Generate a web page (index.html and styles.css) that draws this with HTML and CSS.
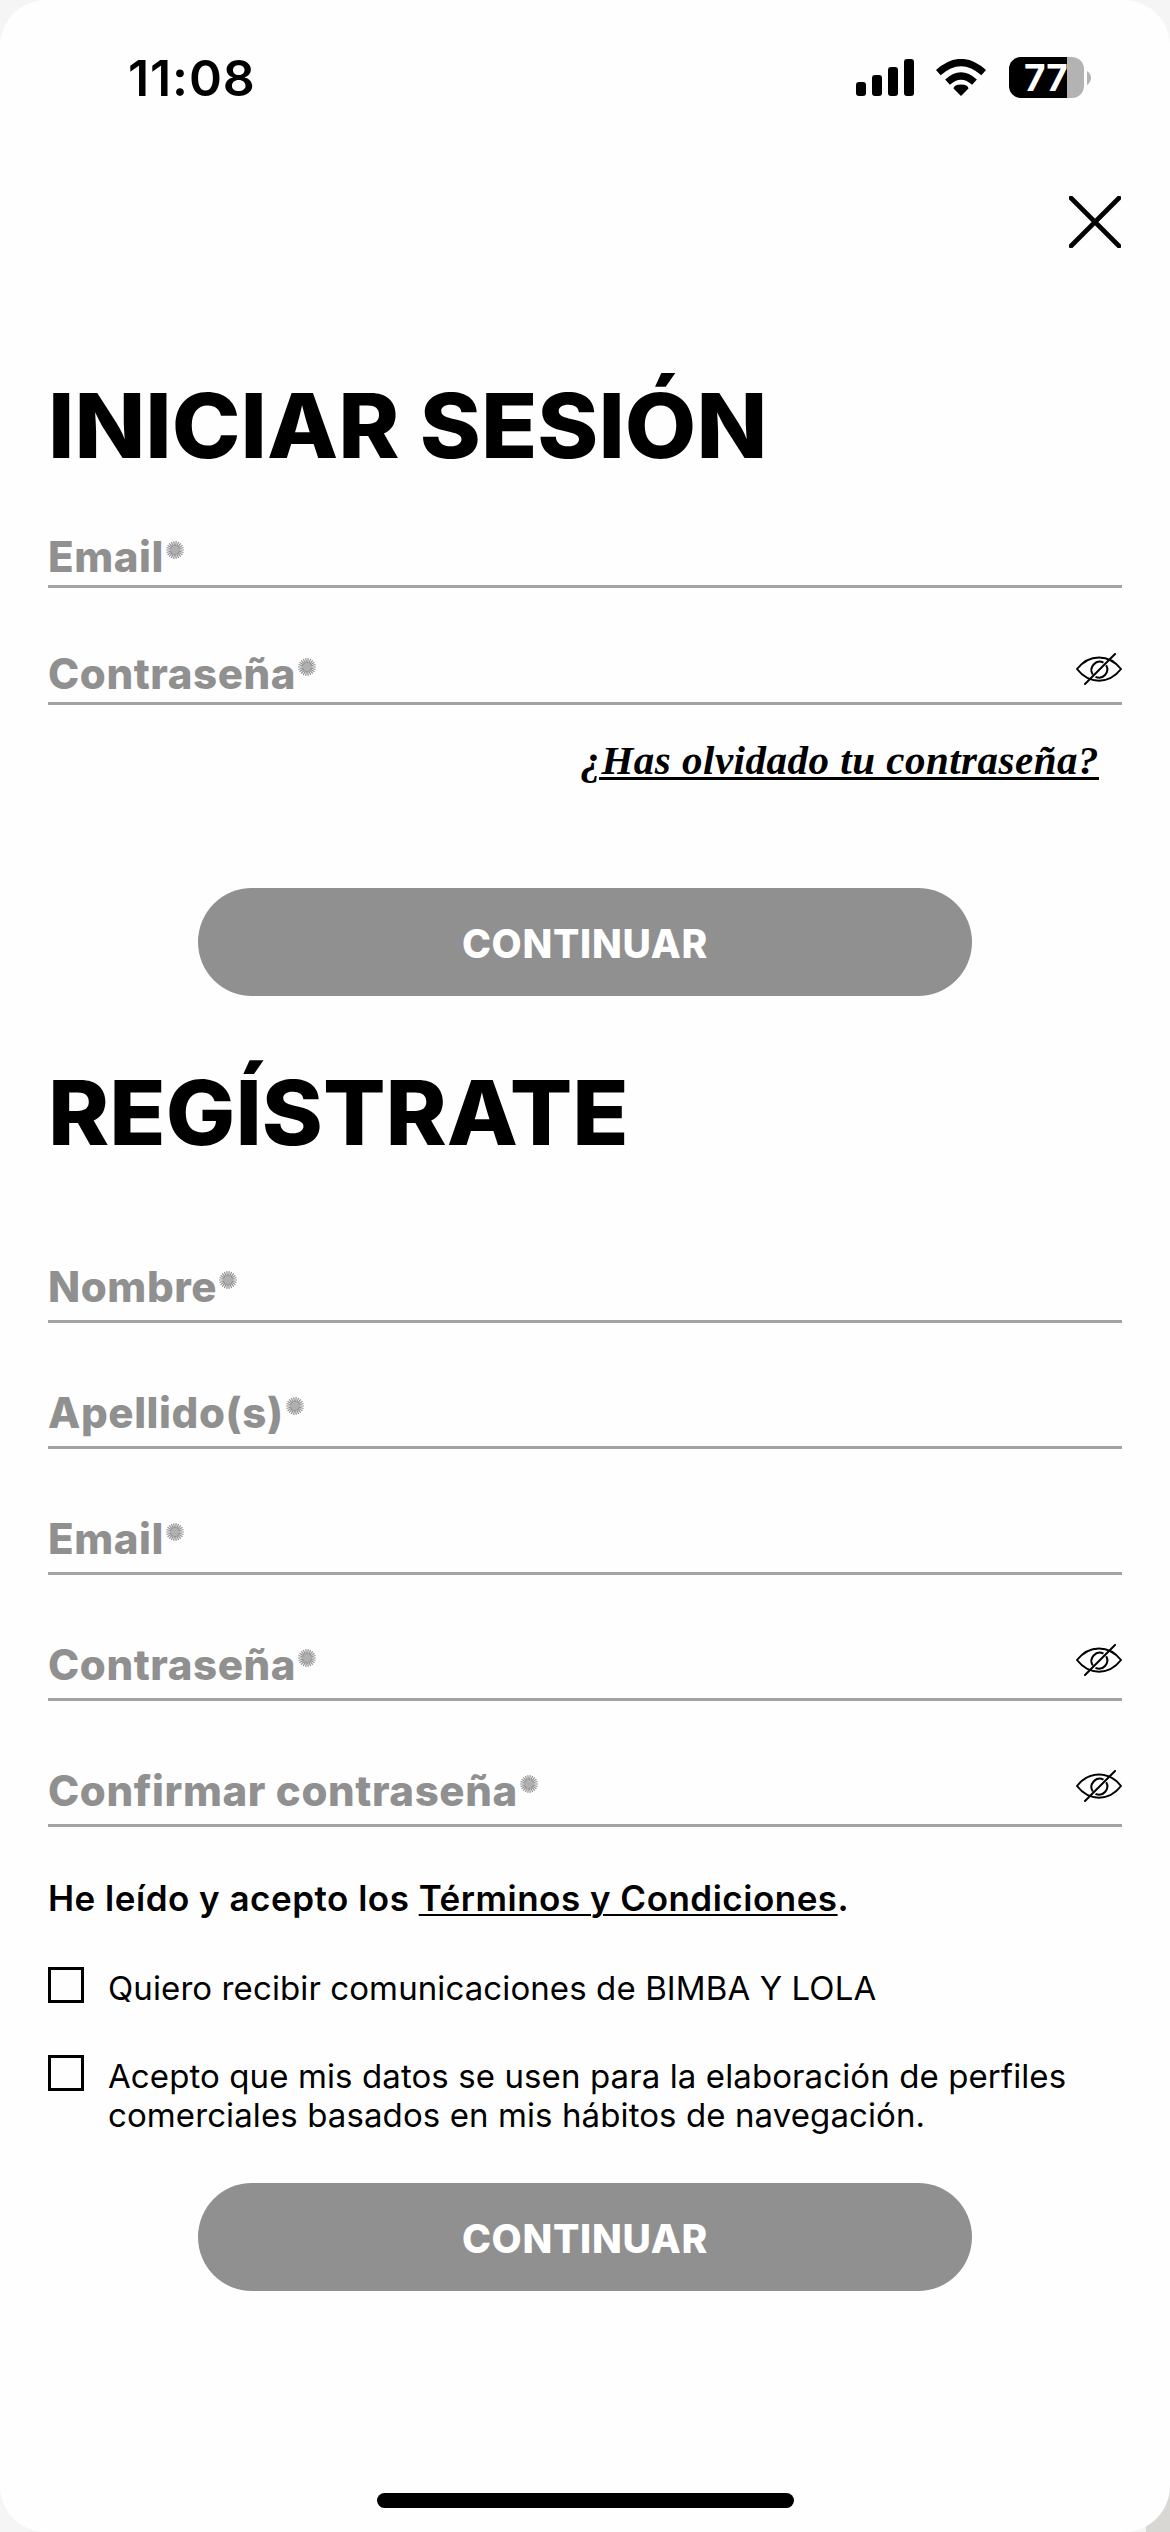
FILE: index.html
```html
<!DOCTYPE html>
<html lang="es">
<head>
  <meta charset="UTF-8" />
  <meta name="viewport" content="width=device-width, initial-scale=1.0"/>
  <title>Iniciar sesión</title>
  <link rel="stylesheet" href="styles.css">
</head>
<body>

<svg class="defs" aria-hidden="true">
  <symbol id="star" viewBox="-9 -9 18 18">
    <path d="M-8.900 0H8.900M-8.540 -2.510L8.540 2.510M-7.490 -4.810L7.490 4.810M-5.830 -6.730L5.830 6.730M-3.700 -8.100L3.700 8.100M-1.270 -8.810L1.270 8.810M1.270 -8.810L-1.270 8.810M3.700 -8.100L-3.700 8.100M5.830 -6.730L-5.830 6.730M7.490 -4.810L-7.490 4.810M8.540 -2.510L-8.540 2.510" fill="none" stroke="currentColor" stroke-width="1.200"/>
    <circle r="4.200" fill="#b0b0b0"/>
  </symbol>
  <symbol id="eye-off" viewBox="0 0 46 32">
    <g fill="none" stroke="#000" stroke-width="2">
      <path d="M1 16C13 0.5 33 0.5 45 16C33 31.500 13 31.500 1 16Z" stroke-linejoin="round"/>
      <path d="M27.500 9.600A8.300 8.300 0 0 0 16.800 21.500"/>
      <path d="M30.200 12.300A8.300 8.300 0 0 1 19.500 23.900"/>
      <path d="M9 31L39 1" stroke-linecap="round"/>
    </g>
  </symbol>
</svg>

<div class="screen">
  <header>
    <div class="status-bar">
      <span class="time">11:08</span>
      <div class="status-icons">
        <svg class="signal" viewBox="0 0 58 37">
          <rect x="0" y="23" width="10" height="14" rx="3"/>
          <rect x="16" y="16" width="10" height="21" rx="3"/>
          <rect x="32" y="8" width="10" height="29" rx="3"/>
          <rect x="48" y="0" width="10" height="37" rx="3"/>
        </svg>
        <svg class="wifi" viewBox="0 0 50 37">
          <path d="M25 37L17.500 29.500Q18 25.500 25 25.500Q32 25.500 32.500 29.500Z"/>
          <path d="M11.500 23.200Q25 10.800 38.500 23.200" fill="none" stroke="#000" stroke-width="7"/>
          <path d="M2.300 13.600Q25 -6.600 47.700 13.600" fill="none" stroke="#000" stroke-width="7"/>
        </svg>
        <div class="battery"><span>77</span></div>
        <svg class="battery-tip" viewBox="0 0 4 14"><path d="M0 0Q4 3 4 7T0 14Z" fill="#b3b3b3"/></svg>
      </div>
    </div>
    <button class="close-button" aria-label="Cerrar">
      <svg viewBox="0 0 52 52"><path d="M2 2L50 50M50 2L2 50" stroke="#000" stroke-width="4.600" stroke-linecap="round"/></svg>
    </button>
  </header>

  <main>
    <h1>INICIAR SESIÓN</h1>
    <form class="login">
      <div class="field"><label>Email</label><svg class="star"><use href="#star"/></svg></div>
      <div class="field"><label>Contraseña</label><svg class="star"><use href="#star"/></svg><svg class="eye"><use href="#eye-off"/></svg></div>
      <a class="forgot" href="#">¿Has olvidado tu contraseña?</a>
      <button class="submit" type="button">CONTINUAR</button>
    </form>

    <h1 class="register-title">REGÍSTRATE</h1>
    <form class="register">
      <div class="field"><label>Nombre</label><svg class="star"><use href="#star"/></svg></div>
      <div class="field"><label>Apellido(s)</label><svg class="star"><use href="#star"/></svg></div>
      <div class="field"><label>Email</label><svg class="star"><use href="#star"/></svg></div>
      <div class="field"><label>Contraseña</label><svg class="star"><use href="#star"/></svg><svg class="eye"><use href="#eye-off"/></svg></div>
      <div class="field"><label>Confirmar contraseña</label><svg class="star"><use href="#star"/></svg><svg class="eye"><use href="#eye-off"/></svg></div>

      <p class="terms">He leído y acepto los <a href="#">Términos y Condiciones</a>.</p>
      <div class="check">
        <span class="box"></span>
        <p>Quiero recibir comunicaciones de BIMBA Y LOLA</p>
      </div>
      <div class="check">
        <span class="box"></span>
        <p>Acepto que mis datos se usen para la elaboración de perfiles<br>comerciales basados en mis hábitos de navegación.</p>
      </div>
      <button class="submit" type="button">CONTINUAR</button>
    </form>
  </main>

  <div class="home-bar"></div>
</div>

</body>
</html>
```
FILE: styles.css
```css
* {
  box-sizing: border-box;
}

body {
  margin: 0;
  font-family: Inter, "Liberation Sans", sans-serif;
  color: #000;
  background: linear-gradient(#d8d7d3, #d8d7d3) no-repeat right bottom / 24px 50px, #f5f5f5;
}

button {
  border: none;
  padding: 0;
  font-family: inherit;
}

.defs {
  display: none;
}

.screen {
  display: flex;
  flex-direction: column;
  width: 1170px;
  height: 2532px;
  background: #fefefe;
  border-radius: 46px;
}

/* status bar */
header {
  display: flex;
  flex-direction: column;
}

.status-bar {
  display: flex;
  justify-content: space-between;
  align-items: center;
  height: 155px;
  padding: 0 79px 0 128px;
}

.time {
  font-size: 50px;
  font-weight: 600;
  letter-spacing: 0.9px;
}

.status-icons {
  display: flex;
  align-items: center;
}

.signal {
  width: 58px;
  height: 37px;
}

.wifi {
  width: 50px;
  height: 37px;
  margin: 0 23px 0 22px;
}

.battery {
  width: 75px;
  height: 41px;
  padding-left: 15px;
  border-radius: 12px;
  background: linear-gradient(to right, #000 58px, #b3b3b3 58px);
  color: #fff;
  font-size: 37px;
  font-weight: 700;
  line-height: 41px;
}

.battery-tip {
  width: 4px;
  height: 14px;
  margin-left: 3px;
}

.close-button {
  align-self: flex-end;
  width: 52px;
  height: 52px;
  margin: 41px 49px 0 0;
  background: none;
}

.close-button svg {
  display: block;
}

main {
  padding: 0 48px;
}

/* headings are set slightly extended */
h1 {
  margin: 133px 0 0;
  font-size: 89px;
  font-weight: 800;
  line-height: 90px;
  transform: scaleX(1.04);
  transform-origin: left;
}

.register-title {
  margin-top: 72px;
}

form {
  display: flex;
  flex-direction: column;
}

.register {
  margin-top: 39px;
}

/* fields */
.field {
  display: flex;
  align-items: flex-end;
  height: 117px;
  padding-bottom: 8px;
  border-bottom: 3px solid #a3a3a3;
  color: #909090;
}

.register .field {
  height: 126px;
  padding-bottom: 13px;
}

.field label {
  font-size: 42px;
  font-weight: 800;
  line-height: 40px;
  letter-spacing: 0.6px;
}

.star {
  width: 18px;
  height: 18px;
  margin: 0 0 18px 2px;
}

.eye {
  width: 46px;
  height: 32px;
  margin: 0 0 9px auto;
}

.forgot {
  align-self: flex-end;
  margin: 31px 23px 0 0;
  color: #000;
  font-family: "Liberation Serif", serif;
  font-size: 41px;
  font-style: italic;
  font-weight: 700;
  line-height: 48px;
  letter-spacing: 0.5px;
  text-decoration-thickness: 3px;
  text-underline-offset: 3px;
}

.submit {
  align-self: center;
  width: 774px;
  height: 108px;
  margin-top: 104px;
  padding-top: 3px;
  border-radius: 54px;
  background: #909090;
  color: #fff;
  font-size: 39px;
  font-weight: 800;
  letter-spacing: 0.7px;
}

.register .submit {
  margin-top: 48px;
}

/* terms and checkboxes */
.terms {
  margin: 49px 0 -1px;
  font-size: 35px;
  font-weight: 600;
  line-height: 44px;
  letter-spacing: 0.5px;
}

.terms a {
  color: #000;
  text-decoration-thickness: 2px;
  text-underline-offset: 3px;
}

.check {
  display: flex;
  gap: 24px;
  margin-top: 48px;
}

.check + .check {
  margin-top: 47px;
}

.box {
  width: 36px;
  height: 36px;
  border: 3px solid #000;
}

.check p {
  margin: 0;
  padding-top: 2px;
  font-size: 33px;
  line-height: 39px;
  letter-spacing: 0.1px;
}

.home-bar {
  width: 417px;
  height: 15px;
  margin: auto auto 24px;
  border-radius: 8px;
  background: #000;
}
```
